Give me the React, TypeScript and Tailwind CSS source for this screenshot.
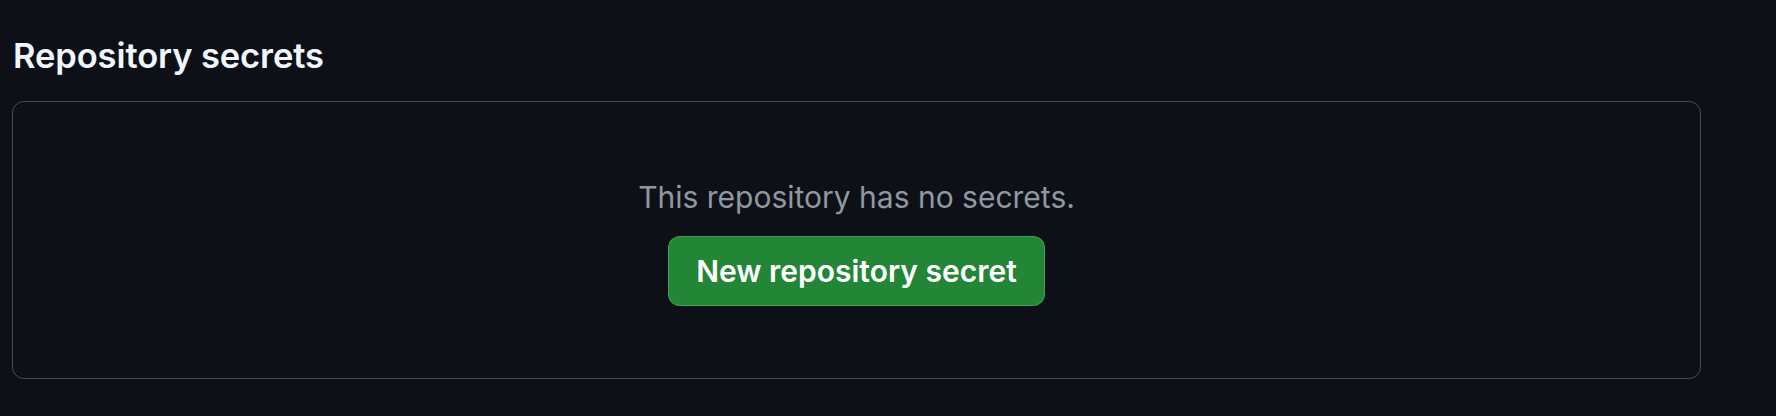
import React from 'react';

export default function App() {
    return (
        <div className="min-h-[416px] w-full bg-[#0d1117] px-3 pt-[35px] font-['Inter','Liberation_Sans',sans-serif]">
            <h2 className="text-[34.5px] leading-[42px] font-semibold text-[#f0f6fc] pl-[1px] tracking-[-0.1px]">Repository secrets</h2>

            <div className="mt-[24px] w-[1689px] h-[278px] rounded-[12px] border-[1.5px] border-[#454c55] flex flex-col items-center pt-[74px]">
                <p className="text-[30px] leading-[42px] text-[#9198a1]">This repository has no secrets.</p>
                <button className="mt-[18px] h-[70px] px-[27px] rounded-[12px] bg-[#238636] border-[1.5px] border-[#46a957]/80 text-white text-[30px] font-semibold">
                    New repository secret
                </button>
            </div>
        </div>
    );
}
